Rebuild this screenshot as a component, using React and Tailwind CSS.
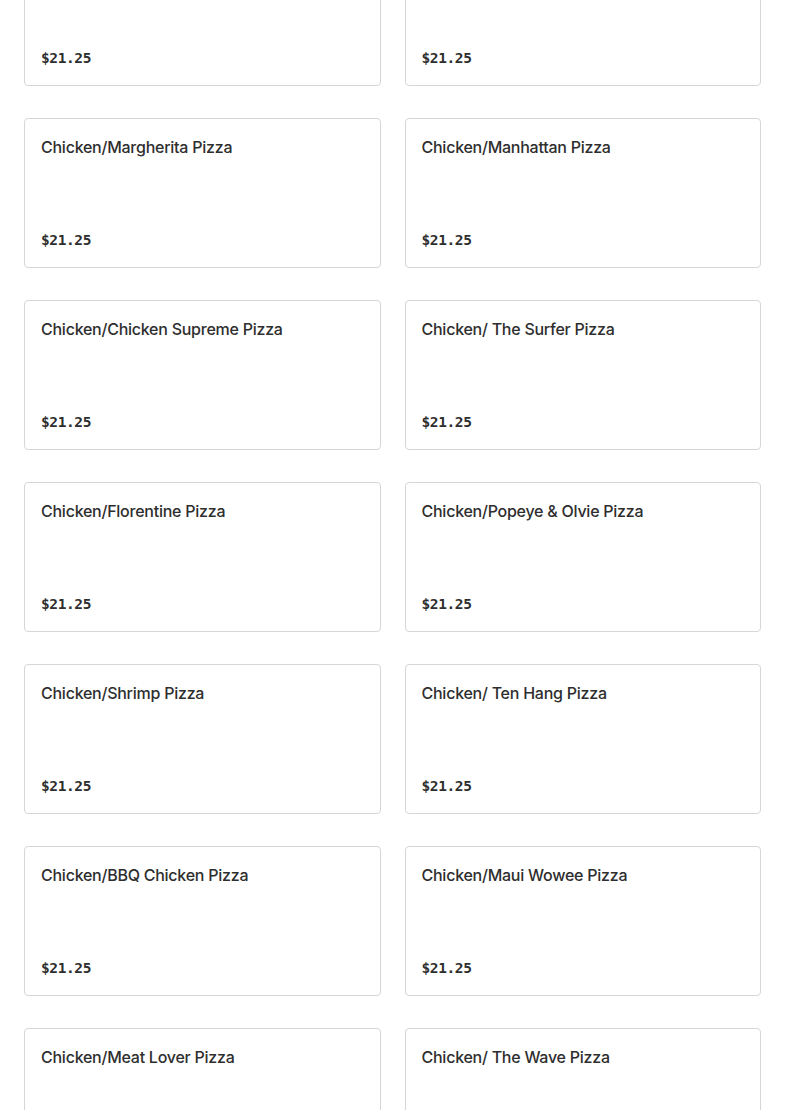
const items = [
  ['', ''],
  ['Chicken/Margherita Pizza', 'Chicken/Manhattan Pizza'],
  ['Chicken/Chicken Supreme Pizza', 'Chicken/ The Surfer Pizza'],
  ['Chicken/Florentine Pizza', 'Chicken/Popeye & Olvie Pizza'],
  ['Chicken/Shrimp Pizza', 'Chicken/ Ten Hang Pizza'],
  ['Chicken/BBQ Chicken Pizza', 'Chicken/Maui Wowee Pizza'],
  ['Chicken/Meat Lover Pizza', 'Chicken/ The Wave Pizza'],
];

function Card({ name, last }) {
  return (
    <div className="h-[150px] border border-[#d6d6d6] rounded-[4px] bg-white px-4 pt-[16px] pb-[17px] flex flex-col justify-between">
      <div className="text-[16px] leading-[24px] font-medium text-[#2e2e2e] font-['Inter',sans-serif] tracking-[-0.25px]">
        {name}
      </div>
      {/* last row's price sits below the fold */}
      {!last && (
        <div className="text-[14.5px] leading-[20px] font-bold text-[#2e2e2e] font-['DejaVu_Sans_Mono',monospace] tracking-[-0.4px]">
          $21.25
        </div>
      )}
    </div>
  );
}

export default function App() {
  return (
    <div className="w-[785px] h-[1110px] overflow-hidden bg-white">
      <div className="-mt-[64px] px-6 grid grid-cols-2 gap-x-6 gap-y-8">
        {items.flat().map((name, i) => (
          <Card key={i} name={name} last={i >= 12} />
        ))}
      </div>
    </div>
  );
}
